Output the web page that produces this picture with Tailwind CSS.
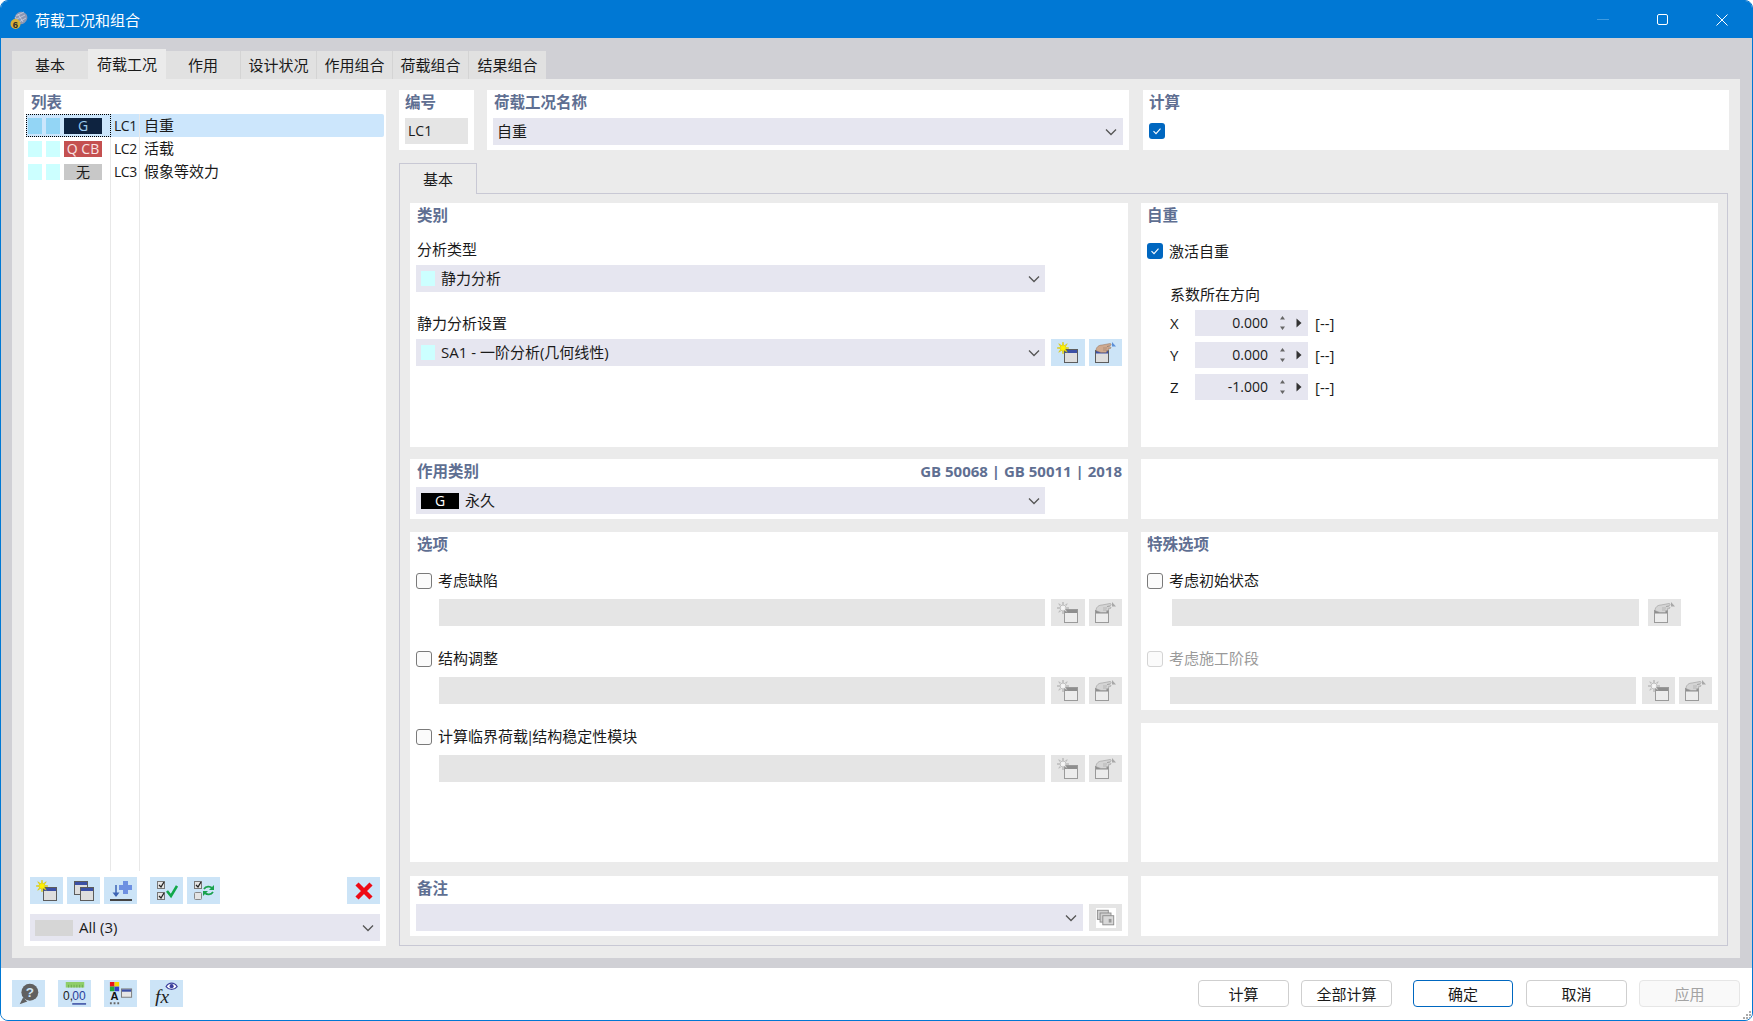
<!DOCTYPE html>
<html lang="zh">
<head>
<meta charset="utf-8">
<title>荷载工况和组合</title>
<script src="https://cdn.jsdelivr.net/npm/@tailwindcss/browser@4"></script>
</head>
<body class="bg-white">
<svg width="0" height="0" class="absolute">
  <defs>
    <symbol id="i-star" viewBox="0 0 13 13"><polygon points="6,0 6.84,3.97 10.24,1.76 8.03,5.16 12,6 8.03,6.84 10.24,10.24 6.84,8.03 6,12 5.16,8.03 1.76,10.24 3.97,6.84 0,6 3.97,5.16 1.76,1.76 5.16,3.97" fill="#fff200" stroke="#d8c400" stroke-width="0.6"/></symbol>
    <symbol id="i-star-d" viewBox="0 0 13 13"><polygon points="6,0 6.84,3.97 10.24,1.76 8.03,5.16 12,6 8.03,6.84 10.24,10.24 6.84,8.03 6,12 5.16,8.03 1.76,10.24 3.97,6.84 0,6 3.97,5.16 1.76,1.76 5.16,3.97" fill="#f6f6f6" stroke="#a6a6a6" stroke-width="0.6"/></symbol>
    <symbol id="i-new" viewBox="0 0 22 22"><rect x="7.5" y="7.5" width="13" height="13" fill="#dedede" stroke="#5c5c5c"/><rect x="8" y="8" width="12" height="3" fill="#3c50a5"/><use href="#i-star" x="0" y="0" width="13" height="13"/></symbol>
    <symbol id="i-new-d" viewBox="0 0 22 22"><rect x="7.5" y="7.5" width="13" height="13" fill="#ececec" stroke="#9a9a9a"/><rect x="8" y="8" width="12" height="3" fill="#8e8e8e"/><use href="#i-star-d" x="0" y="0" width="13" height="13"/></symbol>
    <symbol id="i-copy" viewBox="0 0 22 22"><rect x="1.5" y="1.5" width="13" height="13" fill="#dedede" stroke="#5c5c5c"/><rect x="2" y="2" width="12" height="3" fill="#3c50a5"/><rect x="7.5" y="7.5" width="13" height="13" fill="#dedede" stroke="#5c5c5c"/><rect x="8" y="8" width="12" height="3" fill="#3c50a5"/></symbol>
    <symbol id="i-import" viewBox="0 0 24 22"><rect x="1" y="19" width="22" height="2" fill="#444"/><path d="M14 1h5v4h4v5h-4v4h-5v-4h-4V5h4z" fill="#6d90e2"/><path d="M7 5v11" stroke="#3c64b4" stroke-width="1.5"/><path d="M3.5 12.5L7 17l3.5-4.5z" fill="#3c64b4"/></symbol>
    <symbol id="i-checks" viewBox="0 0 22 22"><rect x="1.5" y="1.5" width="7" height="7" fill="#e4e4e4" stroke="#777"/><path d="M3 5l2 2 3-5" fill="none" stroke="#222" stroke-width="1.3"/><rect x="1.5" y="12.5" width="7" height="7" fill="#e4e4e4" stroke="#777"/><path d="M3 16l2 2 3-5" fill="none" stroke="#222" stroke-width="1.3"/><path d="M11 11l4 5 6-10" fill="none" stroke="#12a84a" stroke-width="2.6"/></symbol>
    <symbol id="i-toggle" viewBox="0 0 22 22"><rect x="1.5" y="1.5" width="7" height="7" fill="#e4e4e4" stroke="#777"/><path d="M3 5l2 2 3-5" fill="none" stroke="#222" stroke-width="1.3"/><rect x="1.5" y="12.5" width="7" height="7" rx="1" fill="#e4e4e4" stroke="#888"/><path d="M11 9c2-3 6-3 8-1" fill="none" stroke="#1aa24e" stroke-width="1.8"/><path d="M21 5v5h-5z" fill="#1aa24e"/><path d="M20 12c-2 3-6 3-8 1" fill="none" stroke="#1aa24e" stroke-width="1.8"/><path d="M10 16v-5h5z" fill="#1aa24e"/></symbol>
    <symbol id="i-x" viewBox="0 0 22 22"><path d="M4 4l14 14M18 4L4 18" stroke="#ee0a14" stroke-width="4.4" fill="none"/></symbol>
    <symbol id="i-hand" viewBox="0 0 22 22"><rect x="0.5" y="8.5" width="13" height="12" fill="#dedede" stroke="#5c5c5c"/><rect x="1" y="9" width="12" height="2.5" fill="#3c50a5"/><path d="M1 8.5C1 5 4 3 7 3l8-1.5c1.5 0 1.5 2 0 2.2L12 4.5l3 .2c1.2.2 1.2 1.8 0 2l-2 .2c1 .4.6 1.8-.4 1.8l-1 .1c.5.8 0 1.7-.8 1.7H6L3 9.5z" fill="#cfa98e" stroke="#8f7260" stroke-width="0.5"/><path d="M8 6h4M8 8h3.5" stroke="#8f7260" stroke-width="0.5"/><path d="M17 0l4 4.5h-4z" fill="#5b8fd8"/></symbol>
    <symbol id="i-hand-d" viewBox="0 0 22 22"><rect x="0.5" y="8.5" width="13" height="12" fill="#ececec" stroke="#9a9a9a"/><rect x="1" y="9" width="12" height="2.5" fill="#8e8e8e"/><path d="M1 8.5C1 5 4 3 7 3l8-1.5c1.5 0 1.5 2 0 2.2L12 4.5l3 .2c1.2.2 1.2 1.8 0 2l-2 .2c1 .4.6 1.8-.4 1.8l-1 .1c.5.8 0 1.7-.8 1.7H6L3 9.5z" fill="#d4d4d4" stroke="#9a9a9a" stroke-width="0.6"/><path d="M8 6h4M8 8h3.5" stroke="#9a9a9a" stroke-width="0.5"/><path d="M17 0l4 4.5h-4z" fill="#a8a8a8"/></symbol>
    <symbol id="i-notes" viewBox="0 0 22 22"><rect x="1.5" y="2.5" width="12" height="10" fill="#d0d0d0" stroke="#8a8a8a"/><rect x="4.5" y="5.5" width="12" height="10" fill="#d0d0d0" stroke="#8a8a8a"/><rect x="7.5" y="8.5" width="12" height="10" fill="#d8d8d8" stroke="#8a8a8a"/><rect x="14" y="12" width="3" height="4" fill="#999"/></symbol>
    <symbol id="i-help" viewBox="0 0 26 26"><circle cx="14" cy="11" r="10" fill="#606060"/><path d="M6 17L2 25l9-3z" fill="#606060"/><text x="14" y="17" font-size="16" font-weight="700" font-family="Liberation Sans" text-anchor="middle" fill="#cce4f7">?</text></symbol>
    <symbol id="i-ruler" viewBox="0 0 26 26"><rect x="3" y="0" width="20" height="6" fill="#8fce6a"/><path d="M6 3v3M9 3v3M12 3v3M15 3v3M18 3v3M21 3v3" stroke="#5d9a43" stroke-width="0.7"/><text x="0" y="20" font-size="13" font-family="Liberation Sans" fill="#222">0,</text><text x="10" y="20" font-size="13" font-family="Liberation Sans" fill="#2a3f9c">00</text><rect x="10" y="23" width="15" height="1.5" fill="#2a3f9c"/></symbol>
    <symbol id="i-color" viewBox="0 0 26 26"><rect x="1" y="0" width="5" height="5" fill="#e8141c"/><rect x="6" y="0" width="5" height="5" fill="#f4d900"/><rect x="1" y="5" width="5" height="5" fill="#22a838"/><rect x="6" y="5" width="5" height="5" fill="#3340c8"/><text x="6" y="20" font-size="12" font-weight="700" font-family="Liberation Sans" text-anchor="middle" fill="#111">A</text><path d="M1 22h2v2H1zM5 22h2v2H5zM9 22h2v2H9z" fill="#666"/><rect x="13.5" y="7.5" width="11" height="9" fill="#e6e6e6" stroke="#777"/><rect x="14" y="8" width="10" height="2.5" fill="#3c50a5"/></symbol>
    <symbol id="i-fx" viewBox="0 0 26 26"><text x="0" y="23" font-size="21" font-style="italic" font-family="Liberation Serif" fill="#222">fx</text><path d="M12 5c3-5 9-5 12 0-3 4-9 4-12 0z" fill="#fff" stroke="#3b3f9c" stroke-width="1.2"/><circle cx="18" cy="4.5" r="2.2" fill="#3b3f9c"/></symbol>
    <symbol id="i-chev" viewBox="0 0 12 8"><path d="M1 1.5l5 5 5-5" fill="none" stroke="#555" stroke-width="1.3"/></symbol>
    <symbol id="i-app" viewBox="0 0 18 20"><ellipse cx="11" cy="8" rx="6.5" ry="6" transform="rotate(-35 11 8)" fill="#8b97b4"/><path d="M6 6l8-4M7 9l8-4M9 12l7-4M8 4l5 8M5 7l5 7" stroke="#d5dae6" stroke-width="0.7"/><circle cx="5.5" cy="14" r="5" fill="#d8b23a"/><text x="5.5" y="17.5" font-size="9.5" font-weight="700" font-family="Liberation Sans" text-anchor="middle" fill="#2b2b2b">6</text></symbol>
  </defs>
</svg>

<div class="w-[1753px] h-[1021px] flex flex-col overflow-hidden rounded-t-[8px] rounded-b-[8px] border border-[#0078d4] bg-[#d0d0d5] font-['Open_Sans','Noto_Sans_CJK_SC',sans-serif] text-[15px] leading-[24px] text-[#1a1a1a]">

  <!-- title bar -->
  <div class="h-[37px] shrink-0 bg-[#0078d4] flex items-center text-white pl-[9px]">
    <svg class="w-[18px] h-[20px] mr-[7px]"><use href="#i-app"/></svg>
    <span>荷载工况和组合</span>
    <div class="ml-auto flex items-center">
      <div class="w-[12px] h-px bg-[#3f9be0] mr-[48px]"></div>
      <div class="w-[11px] h-[11px] border border-white rounded-[2px] mr-[48px]"></div>
      <svg class="w-[12px] h-[12px] mr-[24px]" viewBox="0 0 12 12"><path d="M0.5 0.5l11 11M11.5 0.5l-11 11" stroke="#fff" stroke-width="1"/></svg>
    </div>
  </div>

  <!-- main -->
  <div class="h-[930px] shrink-0 pl-[11px] pr-[12px]">
    <div class="h-[41px] flex items-end">
      <div class="w-[76px] h-[28px] bg-[#e1e1e1] flex items-center justify-center">基本</div>
      <div class="w-[78px] h-[30px] bg-[#ebebeb] flex items-center justify-center">荷载工况</div>
      <div class="w-[74px] h-[28px] bg-[#e1e1e1] flex items-center justify-center">作用</div>
      <div class="w-[76px] h-[28px] bg-[#e1e1e1] border-l border-[#d4d4d4] flex items-center justify-center">设计状况</div>
      <div class="w-[76px] h-[28px] bg-[#e1e1e1] border-l border-[#d4d4d4] flex items-center justify-center">作用组合</div>
      <div class="w-[76px] h-[28px] bg-[#e1e1e1] border-l border-[#d4d4d4] flex items-center justify-center">荷载组合</div>
      <div class="w-[78px] h-[28px] bg-[#e1e1e1] border-l border-[#d4d4d4] flex items-center justify-center">结果组合</div>
    </div>

    <div class="h-[879px] bg-[#ebebeb] pt-[11px] pl-[12px] flex">
      <!-- list panel -->
      <div class="w-[362px] h-[856px] bg-white flex flex-col">
        <div class="h-[24px] pl-[7px] font-semibold text-[15.5px] text-[#5f6f92]">列表</div>
        <div class="h-[757px] mx-[2px] flex flex-col">
          <div class="h-[23px] flex bg-[#cce6fc] rounded-[2px] items-stretch shrink-0">
            <div class="w-[85px] border border-dotted border-black flex items-center pl-[1px] gap-[4px]">
              <div class="w-[14px] h-[16px] bg-[#93d5f5]"></div>
              <div class="w-[14px] h-[16px] bg-[#93d5f5]"></div>
              <div class="w-[38px] h-[16px] bg-[#0e2340] text-[#9ecbef] flex items-center justify-center text-[14px]">G</div>
            </div>
            <div class="w-[29px] border-r border-[#e8e8e8] pl-[3px] text-[14px] tracking-[-0.5px] leading-[23px]">LC1</div>
            <div class="flex-1 pl-[4px] leading-[23px]">自重</div>
          </div>
          <div class="h-[23px] flex items-stretch shrink-0">
            <div class="w-[85px] border-r border-[#e8e8e8] flex items-center pl-[2px] gap-[4px]">
              <div class="w-[14px] h-[16px] bg-[#ccffff]"></div>
              <div class="w-[14px] h-[16px] bg-[#ccffff]"></div>
              <div class="w-[38px] h-[16px] bg-[#c45050] text-[#f8e4e4] flex items-center justify-center text-[14px]">Q CB</div>
            </div>
            <div class="w-[29px] border-r border-[#e8e8e8] pl-[3px] text-[14px] tracking-[-0.5px] leading-[23px]">LC2</div>
            <div class="flex-1 pl-[4px] leading-[23px]">活载</div>
          </div>
          <div class="h-[23px] flex items-stretch shrink-0">
            <div class="w-[85px] border-r border-[#e8e8e8] flex items-center pl-[2px] gap-[4px]">
              <div class="w-[14px] h-[16px] bg-[#ccffff]"></div>
              <div class="w-[14px] h-[16px] bg-[#ccffff]"></div>
              <div class="w-[38px] h-[16px] bg-[#c8c8c8] flex items-center justify-center text-[14px]">无</div>
            </div>
            <div class="w-[29px] border-r border-[#e8e8e8] pl-[3px] text-[14px] tracking-[-0.5px] leading-[23px]">LC3</div>
            <div class="flex-1 pl-[4px] leading-[23px]">假象等效力</div>
          </div>
          <div class="flex-1 flex">
            <div class="w-[85px] border-r border-[#e8e8e8]"></div>
            <div class="w-[29px] border-r border-[#e8e8e8]"></div>
          </div>
        </div>
        <div class="mt-[6px] mx-[6px] flex h-[27px]">
          <div class="w-[33px] bg-[#cce4f7] flex items-center justify-center"><svg class="w-[22px] h-[22px]"><use href="#i-new"/></svg></div>
          <div class="w-[33px] ml-[4px] bg-[#cce4f7] flex items-center justify-center"><svg class="w-[22px] h-[22px]"><use href="#i-copy"/></svg></div>
          <div class="w-[33px] ml-[4px] bg-[#cce4f7] flex items-center justify-center"><svg class="w-[24px] h-[22px]"><use href="#i-import"/></svg></div>
          <div class="w-[33px] ml-[13px] bg-[#cce4f7] flex items-center justify-center"><svg class="w-[22px] h-[22px]"><use href="#i-checks"/></svg></div>
          <div class="w-[33px] ml-[4px] bg-[#cce4f7] flex items-center justify-center"><svg class="w-[22px] h-[22px]"><use href="#i-toggle"/></svg></div>
          <div class="w-[33px] ml-auto bg-[#cce4f7] flex items-center justify-center"><svg class="w-[22px] h-[22px]"><use href="#i-x"/></svg></div>
        </div>
        <div class="mt-[10px] mx-[6px] h-[27px] bg-[#e6e6f0] flex items-center pl-[5px] pr-[6px]">
          <div class="w-[38px] h-[16px] bg-[#d6d6d6] mr-[6px]"></div>
          <span class="-mt-[2px]">All (3)</span>
          <svg class="ml-auto w-[12px] h-[8px]"><use href="#i-chev"/></svg>
        </div>
      </div>

      <!-- right column -->
      <div class="ml-[13px] w-[1330px] flex flex-col">
        <div class="flex h-[60px]">
          <div class="w-[75px] bg-white px-[6px]">
            <div class="h-[24px] font-semibold text-[15.5px] text-[#5f6f92]">编号</div>
            <div class="mt-[4px] w-[63px] h-[26px] bg-[#e5e5e5] pl-[3px] text-[14px] leading-[26px]">LC1</div>
          </div>
          <div class="ml-[13px] w-[642px] bg-white px-[6px]">
            <div class="h-[24px] pl-[1px] font-semibold text-[15.5px] text-[#5f6f92]">荷载工况名称</div>
            <div class="mt-[4px] h-[27px] bg-[#e6e6f0] flex items-center pl-[4px] pr-[6px]">
              <span class="-mt-[2px]">自重</span>
              <svg class="ml-auto w-[12px] h-[8px]"><use href="#i-chev"/></svg>
            </div>
          </div>
          <div class="ml-[14px] w-[586px] bg-white px-[6px]">
            <div class="h-[24px] font-semibold text-[15.5px] text-[#5f6f92]">计算</div>
            <div class="mt-[9px] w-[16px] h-[16px] rounded-[3px] bg-[#0067c0] flex items-center justify-center"><svg class="w-[10px] h-[10px]" viewBox="0 0 10 10"><path d="M1.5 5.2l2.5 2.5 4.5-5" fill="none" stroke="#fff" stroke-width="1.1"/></svg></div>
          </div>
        </div>

        <!-- tab header -->
        <div class="mt-[13px] h-[31px] flex items-stretch">
          <div class="w-[78px] border border-b-0 border-[#c8c8d4] bg-[#ebebeb] flex items-center justify-center z-10 h-[31px]">基本</div>
          <div class="flex-1 border-b border-[#c8c8d4] mr-[1px]"></div>
        </div>

        <!-- tab body -->
        <div class="w-[1329px] h-[753px] -mt-px border border-[#c8c8d4] pl-[10px] pt-[9px] flex flex-col">
          <!-- row 1 -->
          <div class="flex h-[244px] gap-[13px] shrink-0">
            <div class="w-[718px] bg-white px-[6px]">
              <div class="h-[24px] pl-[1px] font-semibold text-[15.5px] text-[#5f6f92]">类别</div>
              <div class="mt-[10px] h-[24px] pl-[1px]">分析类型</div>
              <div class="mt-[4px] w-[629px] h-[27px] bg-[#e6e6f0] flex items-center pl-[5px] pr-[5px]">
                <div class="w-[14px] h-[15px] bg-[#ccffff] mr-[6px]"></div>
                <span class="-mt-[2px]">静力分析</span>
                <svg class="ml-auto w-[12px] h-[8px]"><use href="#i-chev"/></svg>
              </div>
              <div class="mt-[19px] h-[24px] pl-[1px]">静力分析设置</div>
              <div class="mt-[4px] flex h-[27px]">
                <div class="w-[629px] bg-[#e6e6f0] flex items-center pl-[5px] pr-[5px]">
                  <div class="w-[14px] h-[15px] bg-[#ccffff] mr-[6px]"></div>
                  <span class="-mt-[2px]">SA1 - 一阶分析(几何线性)</span>
                  <svg class="ml-auto w-[12px] h-[8px]"><use href="#i-chev"/></svg>
                </div>
                <div class="w-[34px] ml-[6px] bg-[#cce4f7] flex items-center justify-center"><svg class="w-[22px] h-[22px]"><use href="#i-new"/></svg></div>
                <div class="w-[33px] ml-[4px] bg-[#cce4f7] flex items-center justify-center"><svg class="w-[22px] h-[22px]"><use href="#i-hand"/></svg></div>
              </div>
            </div>
            <div class="w-[577px] bg-white px-[6px]">
              <div class="h-[24px] font-semibold text-[15.5px] text-[#5f6f92]">自重</div>
              <div class="mt-[12px] h-[24px] flex items-center">
                <div class="w-[16px] h-[16px] rounded-[3px] bg-[#0067c0] flex items-center justify-center"><svg class="w-[10px] h-[10px]" viewBox="0 0 10 10"><path d="M1.5 5.2l2.5 2.5 4.5-5" fill="none" stroke="#fff" stroke-width="1.1"/></svg></div>
                <span class="ml-[6px]">激活自重</span>
              </div>
              <div class="mt-[19px] h-[24px] pl-[23px]">系数所在方向</div>
              <div class="mt-[4px] h-[26px] flex items-center pl-[23px]">
                <span class="w-[25px]">X</span>
                <div class="w-[113px] h-[26px] bg-[#e6e6f0] flex items-center">
                  <span class="w-[73px] text-right text-[14px]">0.000</span>
                  <svg class="ml-[11px] w-[7px] h-[16px]" viewBox="0 0 7 16"><path d="M3.5 1L6 4.5H1zM3.5 15L1 11.5h5z" fill="#666"/></svg>
                  <svg class="ml-[10px] w-[6px] h-[10px]" viewBox="0 0 6 10"><path d="M0.5 0.5l5 4.5-5 4.5z" fill="#333"/></svg>
                </div>
                <span class="ml-[7px]">[--]</span>
              </div>
              <div class="mt-[6px] h-[26px] flex items-center pl-[23px]">
                <span class="w-[25px]">Y</span>
                <div class="w-[113px] h-[26px] bg-[#e6e6f0] flex items-center">
                  <span class="w-[73px] text-right text-[14px]">0.000</span>
                  <svg class="ml-[11px] w-[7px] h-[16px]" viewBox="0 0 7 16"><path d="M3.5 1L6 4.5H1zM3.5 15L1 11.5h5z" fill="#666"/></svg>
                  <svg class="ml-[10px] w-[6px] h-[10px]" viewBox="0 0 6 10"><path d="M0.5 0.5l5 4.5-5 4.5z" fill="#333"/></svg>
                </div>
                <span class="ml-[7px]">[--]</span>
              </div>
              <div class="mt-[6px] h-[26px] flex items-center pl-[23px]">
                <span class="w-[25px]">Z</span>
                <div class="w-[113px] h-[26px] bg-[#e6e6f0] flex items-center">
                  <span class="w-[73px] text-right text-[14px]">-1.000</span>
                  <svg class="ml-[11px] w-[7px] h-[16px]" viewBox="0 0 7 16"><path d="M3.5 1L6 4.5H1zM3.5 15L1 11.5h5z" fill="#666"/></svg>
                  <svg class="ml-[10px] w-[6px] h-[10px]" viewBox="0 0 6 10"><path d="M0.5 0.5l5 4.5-5 4.5z" fill="#333"/></svg>
                </div>
                <span class="ml-[7px]">[--]</span>
              </div>
            </div>
          </div>

          <!-- row 2 -->
          <div class="flex h-[60px] gap-[13px] mt-[12px] shrink-0">
            <div class="w-[718px] bg-white px-[6px]">
              <div class="h-[24px] pl-[1px] flex justify-between font-semibold text-[15.5px] text-[#5f6f92]">
                <span>作用类别</span>
                <span class="text-[15px] font-bold">GB 50068 | GB 50011 | 2018</span>
              </div>
              <div class="mt-[4px] w-[629px] h-[27px] bg-[#e6e6f0] flex items-center pl-[5px] pr-[5px]">
                <div class="w-[38px] h-[16px] bg-black text-white flex items-center justify-center text-[14px] mr-[6px]">G</div>
                <span class="-mt-[2px]">永久</span>
                <svg class="ml-auto w-[12px] h-[8px]"><use href="#i-chev"/></svg>
              </div>
            </div>
            <div class="w-[577px] bg-white"></div>
          </div>

          <!-- row 3 -->
          <div class="flex h-[330px] gap-[13px] mt-[13px] shrink-0">
            <div class="w-[718px] bg-white px-[6px]">
              <div class="h-[24px] pl-[1px] font-semibold text-[15.5px] text-[#5f6f92]">选项</div>
              <div class="mt-[13px] h-[24px] flex items-center">
                <div class="w-[16px] h-[16px] rounded-[3px] border border-[#7a7a7a] bg-[#fbfbfb]"></div>
                <span class="ml-[6px] -mt-[2px]">考虑缺陷</span>
              </div>
              <div class="mt-[6px] h-[27px] flex pl-[23px]">
                <div class="w-[606px] bg-[#e5e5e5]"></div>
                <div class="w-[34px] ml-[6px] bg-[#e5e5e5] flex items-center justify-center"><svg class="w-[22px] h-[22px]"><use href="#i-new-d"/></svg></div>
                <div class="w-[33px] ml-[4px] bg-[#e5e5e5] flex items-center justify-center"><svg class="w-[22px] h-[22px]"><use href="#i-hand-d"/></svg></div>
              </div>
              <div class="mt-[21px] h-[24px] flex items-center">
                <div class="w-[16px] h-[16px] rounded-[3px] border border-[#7a7a7a] bg-[#fbfbfb]"></div>
                <span class="ml-[6px] -mt-[2px]">结构调整</span>
              </div>
              <div class="mt-[6px] h-[27px] flex pl-[23px]">
                <div class="w-[606px] bg-[#e5e5e5]"></div>
                <div class="w-[34px] ml-[6px] bg-[#e5e5e5] flex items-center justify-center"><svg class="w-[22px] h-[22px]"><use href="#i-new-d"/></svg></div>
                <div class="w-[33px] ml-[4px] bg-[#e5e5e5] flex items-center justify-center"><svg class="w-[22px] h-[22px]"><use href="#i-hand-d"/></svg></div>
              </div>
              <div class="mt-[21px] h-[24px] flex items-center">
                <div class="w-[16px] h-[16px] rounded-[3px] border border-[#7a7a7a] bg-[#fbfbfb]"></div>
                <span class="ml-[6px] -mt-[2px]">计算临界荷载<span class="-mx-[2px]">|</span>结构稳定性模块</span>
              </div>
              <div class="mt-[6px] h-[27px] flex pl-[23px]">
                <div class="w-[606px] bg-[#e5e5e5]"></div>
                <div class="w-[34px] ml-[6px] bg-[#e5e5e5] flex items-center justify-center"><svg class="w-[22px] h-[22px]"><use href="#i-new-d"/></svg></div>
                <div class="w-[33px] ml-[4px] bg-[#e5e5e5] flex items-center justify-center"><svg class="w-[22px] h-[22px]"><use href="#i-hand-d"/></svg></div>
              </div>
            </div>
            <div class="w-[577px] flex flex-col">
              <div class="h-[178px] bg-white px-[6px] shrink-0">
                <div class="h-[24px] font-semibold text-[15.5px] text-[#5f6f92]">特殊选项</div>
                <div class="mt-[13px] h-[24px] flex items-center">
                  <div class="w-[16px] h-[16px] rounded-[3px] border border-[#7a7a7a] bg-[#fbfbfb]"></div>
                  <span class="ml-[6px] -mt-[2px]">考虑初始状态</span>
                </div>
                <div class="mt-[6px] h-[27px] flex pl-[25px]">
                  <div class="w-[467px] bg-[#e5e5e5]"></div>
                  <div class="w-[33px] ml-[9px] bg-[#e5e5e5] flex items-center justify-center"><svg class="w-[22px] h-[22px]"><use href="#i-hand-d"/></svg></div>
                </div>
                <div class="mt-[21px] h-[24px] flex items-center text-[#9a9a9a]">
                  <div class="w-[16px] h-[16px] rounded-[3px] border border-[#d4d4d4] bg-[#fbfbfb]"></div>
                  <span class="ml-[6px] -mt-[2px]">考虑施工阶段</span>
                </div>
                <div class="mt-[6px] h-[27px] flex pl-[23px]">
                  <div class="w-[466px] bg-[#e5e5e5]"></div>
                  <div class="w-[33px] ml-[6px] bg-[#e5e5e5] flex items-center justify-center"><svg class="w-[22px] h-[22px]"><use href="#i-new-d"/></svg></div>
                  <div class="w-[33px] ml-[4px] bg-[#e5e5e5] flex items-center justify-center"><svg class="w-[22px] h-[22px]"><use href="#i-hand-d"/></svg></div>
                </div>
              </div>
              <div class="mt-[13px] flex-1 bg-white"></div>
            </div>
          </div>

          <!-- row 4 -->
          <div class="flex h-[60px] gap-[13px] mt-[14px] shrink-0">
            <div class="w-[718px] bg-white px-[6px]">
              <div class="h-[24px] pl-[1px] font-semibold text-[15.5px] text-[#5f6f92]">备注</div>
              <div class="mt-[4px] flex h-[27px]">
                <div class="w-[667px] bg-[#e6e6f0] flex items-center pr-[6px]">
                  <svg class="ml-auto w-[12px] h-[8px]"><use href="#i-chev"/></svg>
                </div>
                <div class="w-[33px] ml-[6px] bg-[#e5e5e5] flex items-center justify-center">
                  <div class="w-[20px] h-[20px] bg-white flex items-center justify-center"><svg class="w-[20px] h-[20px]"><use href="#i-notes"/></svg></div>
                </div>
              </div>
            </div>
            <div class="w-[577px] bg-white"></div>
          </div>
        </div>
      </div>
    </div>
  </div>

  <!-- footer -->
  <div class="flex-1 bg-white relative flex items-start pt-[12px] pl-[11px] pr-[12px]">
    <div class="flex gap-[13px]">
      <div class="w-[33px] h-[27px] bg-[#cce4f7] flex items-center justify-center"><svg class="w-[22px] h-[22px]"><use href="#i-help"/></svg></div>
      <div class="w-[33px] h-[27px] bg-[#cce4f7] flex items-center justify-center"><svg class="w-[24px] h-[24px]"><use href="#i-ruler"/></svg></div>
      <div class="w-[33px] h-[27px] bg-[#cce4f7] flex items-center justify-center"><svg class="w-[24px] h-[24px]"><use href="#i-color"/></svg></div>
      <div class="w-[33px] h-[27px] bg-[#cce4f7] flex items-center justify-center"><svg class="w-[24px] h-[24px]"><use href="#i-fx"/></svg></div>
    </div>
    <div class="ml-auto flex h-[27px]">
      <div class="w-[91px] border border-[#cfcfcf] rounded-[4px] flex items-center justify-center bg-white">计算</div>
      <div class="w-[91px] ml-[12px] border border-[#cfcfcf] rounded-[4px] flex items-center justify-center bg-white">全部计算</div>
      <div class="w-[100px] ml-[21px] border border-[#0067c0] rounded-[4px] flex items-center justify-center bg-white">确定</div>
      <div class="w-[101px] ml-[13px] border border-[#cfcfcf] rounded-[4px] flex items-center justify-center bg-white">取消</div>
      <div class="w-[101px] ml-[12px] border border-[#e6e6e6] rounded-[4px] flex items-center justify-center bg-[#f9f9f9] text-[#a3a3a3]">应用</div>
    </div>
    <div class="absolute right-[1px] bottom-[1px] grid grid-cols-3 gap-[1px]">
      <span></span><span></span><span class="w-[2px] h-[2px] bg-[#aaa]"></span>
      <span></span><span class="w-[2px] h-[2px] bg-[#aaa]"></span><span class="w-[2px] h-[2px] bg-[#aaa]"></span>
      <span class="w-[2px] h-[2px] bg-[#aaa]"></span><span class="w-[2px] h-[2px] bg-[#aaa]"></span><span class="w-[2px] h-[2px] bg-[#aaa]"></span>
    </div>
  </div>
</div>
</body>
</html>
